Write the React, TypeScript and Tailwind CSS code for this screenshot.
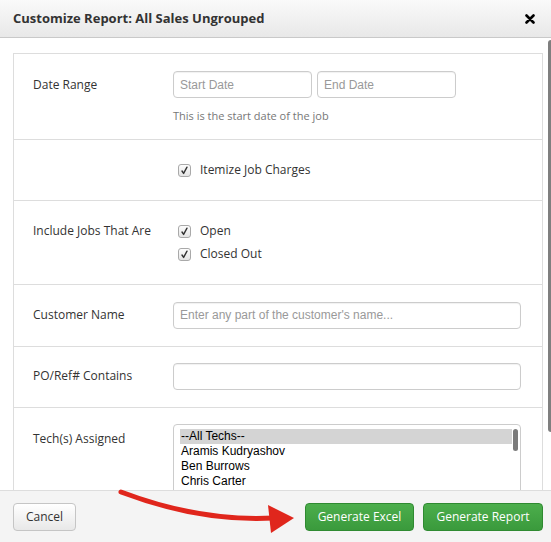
import React from 'react';

const techs = ['--All Techs--', 'Aramis Kudryashov', 'Ben Burrows', 'Chris Carter'];

function Check({ label }: { label: string }) {
  return (
    <label className="flex h-[20px] items-center gap-[9px] pl-[5px]">
      <span className="flex h-[13px] w-[13px] items-center justify-center rounded-[3px] border border-[#a9a9a9] bg-gradient-to-b from-[#fdfdfd] to-[#e4e4e4]">
        <svg width="9" height="9" viewBox="0 0 9 9" fill="none">
          <path d="M2 5 L3.6 7.4 L7 1.2" stroke="#333" strokeWidth="1.4" strokeLinecap="round" strokeLinejoin="round" />
        </svg>
      </span>
      <span className="text-[12px] text-[#333]">{label}</span>
    </label>
  );
}

function TextBox({ placeholder, className = '' }: { placeholder?: string; className?: string }) {
  return (
    <input
      placeholder={placeholder}
      className={`h-[27px] rounded-[4px] border border-[#cccccc] bg-white px-[6px] text-[12px] text-[#333] shadow-[inset_0_1px_1px_rgba(0,0,0,0.06)] outline-none placeholder:text-[#999] font-['Liberation_Sans',Arial,sans-serif] ${className}`}
    />
  );
}

function Row({ label, children, className = '' }: { label?: string; children: React.ReactNode; className?: string }) {
  return (
    <div className={`flex border-b border-[#dddddd] pl-[19px] pr-[21px] ${className}`}>
      <div className="flex h-[27px] w-[140px] shrink-0 items-center text-[12px] text-[#333]">{label}</div>
      <div className="flex-1">{children}</div>
    </div>
  );
}

export default function App() {
  return (
    <div className="relative flex h-[542px] w-[551px] flex-col overflow-hidden bg-white font-['Open_Sans',sans-serif]">
      {/* Header */}
      <header className="flex h-[38px] shrink-0 items-center justify-between border-b border-[#c9c9c9] bg-gradient-to-b from-[#fafafa] to-[#e8e8e8] pl-[13px] pr-[16px]">
        <h1 className="text-[13px] font-bold text-[#333]">Customize Report: All Sales Ungrouped</h1>
        <svg width="10" height="10" viewBox="0 0 10 10" className="mt-[1px]">
          <path d="M1.5 1.5 L8.5 8.5 M8.5 1.5 L1.5 8.5" stroke="#000" strokeWidth="2.6" strokeLinecap="round" />
        </svg>
      </header>

      {/* Body */}
      <div className="relative flex-1 overflow-hidden px-[13px] pt-[15px]">
        <div className="w-[530px] border border-[#dddddd]">
          <Row label="Date Range" className="pb-[15px] pt-[17px]">
            <div className="flex gap-[5px]">
              <TextBox placeholder="Start Date" className="w-[139px]" />
              <TextBox placeholder="End Date" className="w-[139px]" />
            </div>
            <p className="mt-[10px] text-[11px] leading-[16px] text-[#777]">This is the start date of the job</p>
          </Row>

          <Row className="pb-[20px] pt-[20px] [&>div:first-child]:h-[20px]">
            <Check label="Itemize Job Charges" />
          </Row>

          <Row label="Include Jobs That Are" className="pb-[20px] pt-[20px] [&>div:first-child]:h-[20px]">
            <div className="flex flex-col gap-[3px]">
              <Check label="Open" />
              <Check label="Closed Out" />
            </div>
          </Row>

          <Row label="Customer Name" className="pb-[17px] pt-[16px]">
            <TextBox placeholder="Enter any part of the customer's name..." className="w-full" />
          </Row>

          <Row label="PO/Ref# Contains" className="pb-[17px] pt-[16px]">
            <TextBox className="w-full" />
          </Row>

          <Row label="Tech(s) Assigned" className="pt-[16px] [&>div:first-child]:h-[29px]">
            <div className="relative h-[90px] rounded-[4px] border border-[#cccccc] bg-white pl-[6px] pr-[8px] pt-[4px] font-['Liberation_Sans',Arial,sans-serif] text-[12px] leading-[15px] text-black">
              {techs.map((t, i) => (
                <div key={t} className={`px-[1px] ${i === 0 ? 'bg-[#d4d4d4]' : ''}`}>
                  {t}
                </div>
              ))}
              <div className="absolute right-[2px] top-[4px] h-[22px] w-[5px] rounded-full bg-[#7b7b7b]" />
            </div>
          </Row>
        </div>

        {/* page scrollbar */}
        <div className="absolute right-0 top-[2px] h-[392px] w-[3px] rounded-l-full bg-[#7f7f7f]" />
      </div>

      {/* Footer */}
      <footer className="flex h-[52px] shrink-0 items-start justify-between border-t border-[#dddddd] bg-[#f4f4f4] pl-[13px] pr-[8px] pt-[12px]">
        <button className="h-[28px] w-[63px] rounded-[4px] border border-[#c5c5c5] bg-gradient-to-b from-white to-[#e8e8e8] text-[12px] text-[#333]">
          Cancel
        </button>
        <div className="flex gap-[9px]">
          <button className="h-[28px] w-[109px] rounded-[4px] border border-[#2f8a31] bg-gradient-to-b from-[#4cae4c] to-[#3a9a3c] text-[12px] text-white">
            Generate Excel
          </button>
          <button className="h-[28px] w-[120px] rounded-[4px] border border-[#2f8a31] bg-gradient-to-b from-[#4cae4c] to-[#3a9a3c] text-[12px] text-white">
            Generate Report
          </button>
        </div>
      </footer>

      {/* red arrow annotation */}
      <svg className="pointer-events-none absolute left-0 top-0" width="551" height="542" viewBox="0 0 551 542">
        <path d="M121 492 Q 200 522 274 518" stroke="#e0261c" strokeWidth="5" fill="none" strokeLinecap="round" />
        <path d="M268 505 L294 518 L271 533 Z" fill="#e0261c" />
      </svg>
    </div>
  );
}
